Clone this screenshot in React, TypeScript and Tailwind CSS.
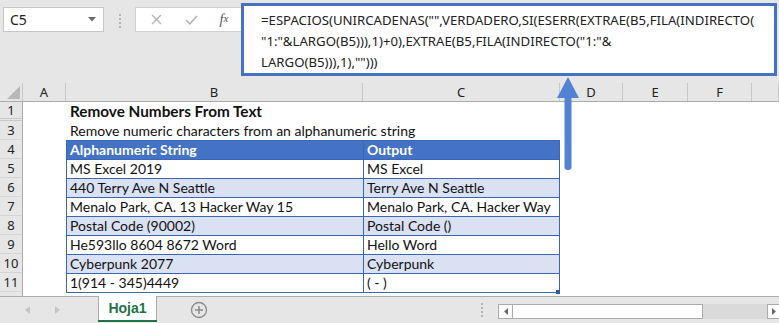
import React from 'react';

type Row = { n: number; b?: string; c?: string; kind?: 'title' | 'sub' | 'head' | 'even' | 'odd' };

const rows: Row[] = [
  { n: 1, b: 'Remove Numbers From Text', kind: 'title' },
  { n: 3, b: 'Remove numeric characters from an alphanumeric string', kind: 'sub' },
  { n: 4, b: 'Alphanumeric String', c: 'Output', kind: 'head' },
  { n: 5, b: 'MS Excel 2019', c: 'MS Excel', kind: 'odd' },
  { n: 6, b: '440 Terry Ave N Seattle', c: 'Terry Ave N Seattle', kind: 'even' },
  { n: 7, b: 'Menalo Park, CA. 13 Hacker Way 15', c: 'Menalo Park, CA. Hacker Way', kind: 'odd' },
  { n: 8, b: 'Postal Code (90002)', c: 'Postal Code ()', kind: 'even' },
  { n: 9, b: 'He593llo 8604 8672 Word', c: 'Hello Word', kind: 'odd' },
  { n: 10, b: 'Cyberpunk 2077', c: 'Cyberpunk', kind: 'even' },
  { n: 11, b: '1(914 - 345)4449', c: '( - )', kind: 'odd' },
];

const cols = [
  { name: 'A', w: 'w-[43px]' },
  { name: 'B', w: 'w-[297px]' },
  { name: 'C', w: 'w-[197px]' },
  { name: 'D', w: 'w-[63px]' },
  { name: 'E', w: 'w-[65px]' },
  { name: 'F', w: 'w-[64px]' },
  { name: '', w: 'flex-1' },
];

const uiFont = "font-['Noto_Sans','Open_Sans',sans-serif]";
const cellFont = "font-['Lato','Liberation_Sans',sans-serif]";

const FormulaBar = () => (
  <div className="flex items-start h-[83px] shrink-0">
    {/* name box */}
    <div className={`ml-[3px] mt-[7px] w-[101px] h-[25px] bg-white border border-[#c6c6c6] flex items-center justify-between pl-[6px] pr-[7px] text-[14px] text-[#222] ${uiFont}`}>
      <span>C5</span>
      <svg width="8" height="5" viewBox="0 0 8 5">
        <path d="M0 0 L8 0 L4 4.5 Z" fill="#6b6b6b" />
      </svg>
    </div>
    {/* grip */}
    <div className="w-[31px] mt-[14px] flex flex-col items-center gap-[2px]">
      <div className="w-[2px] h-[2px] bg-[#b5b5b5]" />
      <div className="w-[2px] h-[2px] bg-[#b5b5b5]" />
      <div className="w-[2px] h-[2px] bg-[#b5b5b5]" />
      <div className="w-[2px] h-[2px] bg-[#b5b5b5]" />
    </div>
    {/* cancel / enter / fx */}
    <div className="mt-[7px] w-[106px] h-[25px] bg-white border border-[#d0d0d0] border-r-0 flex items-center">
      <div className="w-[37px] flex justify-center pl-[3px]">
        <svg width="11" height="11" viewBox="0 0 11 11">
          <path d="M1 1 L10 10 M10 1 L1 10" stroke="#b3b3b3" strokeWidth="1.4" />
        </svg>
      </div>
      <div className="w-[36px] flex justify-center">
        <svg width="13" height="10" viewBox="0 0 13 10">
          <path d="M1 5 L4.8 8.8 L12 1" stroke="#b3b3b3" strokeWidth="1.6" fill="none" />
        </svg>
      </div>
      <div className="w-[30px] flex justify-center font-['Liberation_Serif',serif] italic text-[14px] text-[#555] leading-none">
        f<span className="text-[11px]">x</span>
      </div>
    </div>
    {/* expanded formula */}
    <div className={`mt-[3px] w-[536px] h-[73px] bg-white border-[3px] border-[#4472c4] pl-[17px] pt-[4px] text-[13.2px] leading-[21px] text-[#222] whitespace-nowrap ${uiFont}`}>
      <div>=ESPACIOS(UNIRCADENAS("",VERDADERO,SI(ESERR(EXTRAE(B5,FILA(INDIRECTO(</div>
      <div>"1:"&amp;LARGO(B5))),1)+0),EXTRAE(B5,FILA(INDIRECTO("1:"&amp;</div>
      <div>LARGO(B5))),1),"")))</div>
    </div>
  </div>
);

const ColumnHeaders = () => (
  <div className={`flex h-[19px] shrink-0 border-b border-[#ababab] text-[13px] text-[#222] ${uiFont}`}>
    <div className="w-[23px] border-r border-[#c8c8c8] flex items-end justify-end pr-[2px] pb-[2px]">
      <svg width="13" height="13" viewBox="0 0 13 13">
        <path d="M13 0 L13 13 L0 13 Z" fill="#b8b8b8" />
      </svg>
    </div>
    {cols.map((c, i) => (
      <div key={i} className={`${c.w} border-r border-[#c8c8c8] flex items-center justify-center leading-none`}>
        {c.name}
      </div>
    ))}
  </div>
);

const GridRow = ({ r }: { r: Row }) => {
  const inTable = r.kind === 'head' || r.kind === 'even' || r.kind === 'odd';
  const fill =
    r.kind === 'head' ? 'bg-[#4472c4] text-white font-bold' : r.kind === 'even' ? 'bg-[#d9e1f2] text-[#111]' : 'bg-white text-[#111]';
  const border = inTable ? 'border-t border-[#3a66b5]' : '';
  return (
    <div className="flex h-[19px] shrink-0">
      <div
        className={`w-[23px] shrink-0 bg-[#e6e6e6] border-r border-[#ababab] ${
          r.n === 1 ? 'border-b-[3px] border-b-[#c8c8c8] border-double' : 'border-b border-b-[#d4d4d4]'
        } flex items-center justify-center text-[13px] text-[#222] leading-none ${uiFont}`}
      >
        {r.n}
      </div>
      <div className="w-[43px] shrink-0" />
      {inTable ? (
        <>
          <div className={`w-[297px] shrink-0 ${fill} ${border} border-l border-[#3a66b5] pl-[3px] flex items-center text-[14px] leading-none whitespace-nowrap ${cellFont}`}>
            {r.b}
          </div>
          <div className={`w-[197px] shrink-0 ${fill} ${border} border-x border-[#3a66b5] pl-[3px] flex items-center text-[14px] leading-none whitespace-nowrap ${cellFont} relative`}>
            {r.c}
            {r.n === 11 && <div className="absolute right-[-1px] bottom-[-2px] w-[4px] h-[4px] bg-[#2e5aa8]" />}
          </div>
        </>
      ) : (
        <div
          className={`pl-[4px] flex items-center leading-none whitespace-nowrap text-[#111] ${cellFont} ${
            r.kind === 'title' ? 'font-bold text-[15.3px]' : 'text-[14px]'
          }`}
        >
          {r.b}
        </div>
      )}
    </div>
  );
};

const TabBar = () => (
  <div className="flex items-start h-[27px] shrink-0 border-t border-[#ababab] bg-[#e6e6e6]">
    <div className="w-[98px] h-[26px] flex items-center">
      <svg className="ml-[25px]" width="5" height="8" viewBox="0 0 5 8">
        <path d="M5 0 L0 4 L5 8 Z" fill="#c4c4c4" />
      </svg>
      <svg className="ml-[25px]" width="5" height="8" viewBox="0 0 5 8">
        <path d="M0 0 L5 4 L0 8 Z" fill="#c4c4c4" />
      </svg>
    </div>
    <div className="-mt-px w-[59px] h-[26px] bg-white border-x border-[#ababab] flex flex-col">
      <div className="flex-1 flex items-center justify-center font-['Liberation_Sans',sans-serif] font-bold text-[14px] text-[#217346]">
        Hoja1
      </div>
      <div className="h-[2px] mx-[-1px] bg-[#217346]" />
    </div>
    <div className="ml-[33px] mt-[4px]">
      <svg width="18" height="18" viewBox="0 0 18 18">
        <circle cx="9" cy="9" r="7.5" fill="none" stroke="#8a8a8a" strokeWidth="1.3" />
        <path d="M9 5 V13 M5 9 H13" stroke="#8a8a8a" strokeWidth="1.5" />
      </svg>
    </div>
    <div className="ml-[273px] mt-[6px] flex flex-col gap-[2px]">
      <div className="w-[2px] h-[2px] bg-[#b5b5b5]" />
      <div className="w-[2px] h-[2px] bg-[#b5b5b5]" />
      <div className="w-[2px] h-[2px] bg-[#b5b5b5]" />
      <div className="w-[2px] h-[2px] bg-[#b5b5b5]" />
    </div>
    <div className="ml-[15px] mt-[7px] flex h-[15px] flex-1">
      <div className="w-[15px] bg-white border border-[#ababab] flex items-center justify-center">
        <svg width="4" height="7" viewBox="0 0 4 7">
          <path d="M4 0 L0 3.5 L4 7 Z" fill="#6b6b6b" />
        </svg>
      </div>
      <div className="w-[190px] bg-white border border-l-0 border-[#ababab]" />
      <div className="flex-1 bg-[#dadada]" />
      <div className="w-[12px] bg-white border border-r-0 border-[#ababab] flex items-center justify-center">
        <svg width="4" height="7" viewBox="0 0 4 7">
          <path d="M0 0 L4 3.5 L0 7 Z" fill="#6b6b6b" />
        </svg>
      </div>
    </div>
  </div>
);

export default function App() {
  return (
    <div className="relative w-[779px] h-[323px] overflow-hidden bg-[#e6e6e6] flex flex-col">
      <FormulaBar />
      <ColumnHeaders />
      <div className="flex-1 bg-white flex flex-col overflow-hidden">
        {rows.map((r) => (
          <GridRow key={r.n} r={r} />
        ))}
        <div className="flex flex-1">
          <div className="w-[23px] bg-[#e6e6e6] border-r border-[#ababab]" />
          <div className="w-[43px]" />
          <div className="w-[494px] border-t border-[#3a66b5] h-0" />
        </div>
      </div>
      <TabBar />
      {/* callout arrow pointing at the formula */}
      <svg className="absolute left-[555px] top-[76px]" width="26" height="96" viewBox="0 0 26 96">
        <path d="M13 1 L24 22 L2 22 Z" fill="#5282d2" />
        <rect x="9.5" y="20" width="7" height="74" rx="3" fill="#5282d2" />
      </svg>
    </div>
  );
}
